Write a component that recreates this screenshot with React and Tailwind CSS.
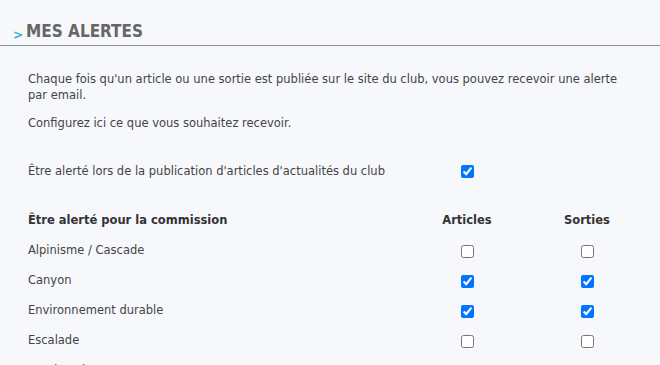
import React from 'react';

const commissions = [
  { name: 'Alpinisme / Cascade', articles: false, sorties: false },
  { name: 'Canyon', articles: true, sorties: true },
  { name: 'Environnement durable', articles: true, sorties: true },
  { name: 'Escalade', articles: false, sorties: false },
  { name: 'Randonnée', articles: true, sorties: true },
];

const Box = ({ checked }) => (
  <input type="checkbox" defaultChecked={checked} className="m-0 h-[13px] w-[13px]" />
);

const App = () => {
  return (
    <div className="h-screen bg-[#f6f8fb] text-[#444] font-['DejaVu_Sans',sans-serif] text-[11.5px] overflow-hidden">
      {/* Titre */}
      <div className="flex items-end border-b border-[#8d8d8d] pl-[13px] pt-[20px] pb-[3px]">
        <span className="mr-[3px] mb-[1px] text-[12px] font-bold leading-none text-[#3aaee0]">&gt;</span>
        <h1 className="font-['DejaVu_Sans_Condensed',sans-serif] text-[17px] font-bold leading-[22px] text-[#666]">
          MES ALERTES
        </h1>
      </div>

      <div className="px-[28px] pt-[25px]">
        <p className="leading-[16px]">
          Chaque fois qu'un article ou une sortie est publiée sur le site du club, vous pouvez recevoir une alerte par email.
        </p>
        <p className="mt-[12px] leading-[16px]">Configurez ici ce que vous souhaitez recevoir.</p>

        <div className="mt-[32px] grid grid-cols-[379px_120px_120px] items-center h-[16px]">
          <span>Être alerté lors de la publication d'articles d'actualités du club</span>
          <div className="flex justify-center">
            <Box checked />
          </div>
        </div>

        {/* Commissions */}
        <div className="mt-[27px] grid grid-cols-[379px_120px_120px] auto-rows-[30px] items-center">
          <span className="font-bold text-[#333]">Être alerté pour la commission</span>
          <span className="text-center font-bold text-[#333]">Articles</span>
          <span className="text-center font-bold text-[#333]">Sorties</span>
          {commissions.map((c) => (
            <React.Fragment key={c.name}>
              <span>{c.name}</span>
              <div className="flex justify-center">
                <Box checked={c.articles} />
              </div>
              <div className="flex justify-center">
                <Box checked={c.sorties} />
              </div>
            </React.Fragment>
          ))}
        </div>
      </div>
    </div>
  );
};

export default App;
